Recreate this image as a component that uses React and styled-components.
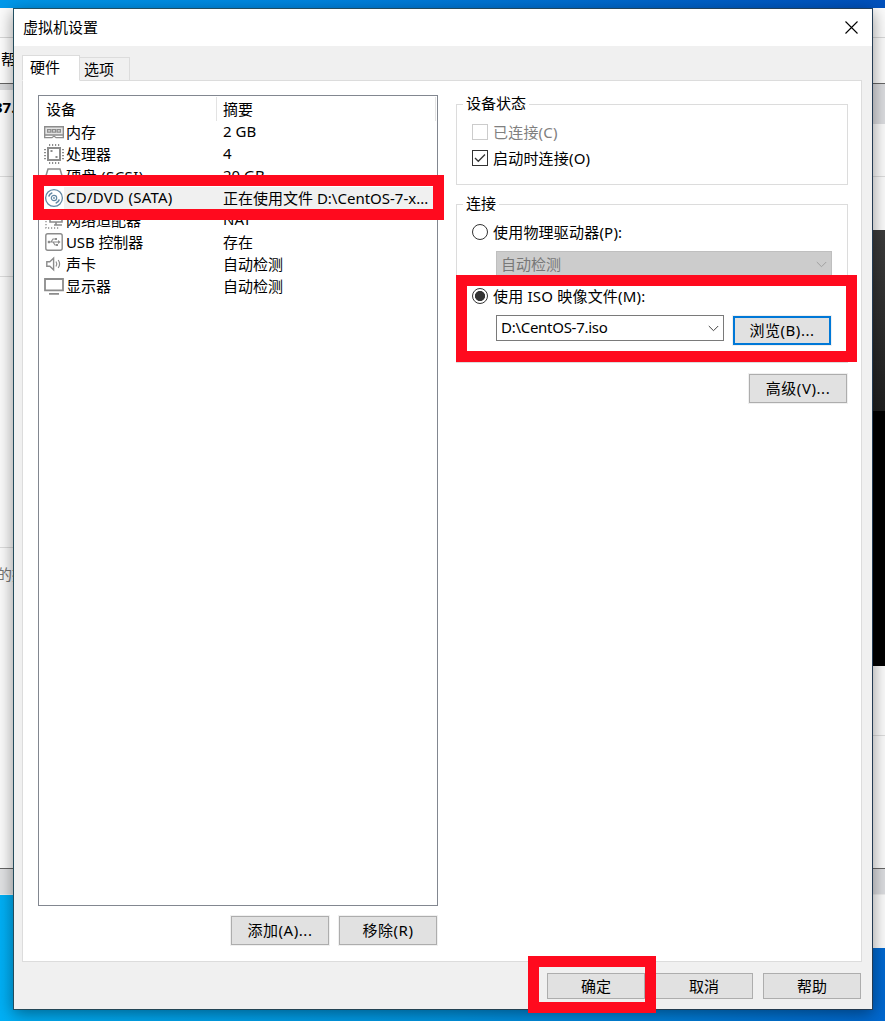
import React from 'react';
import styled, { createGlobalStyle } from 'styled-components';

const GlobalStyle = createGlobalStyle`
  * {
    box-sizing: border-box;
  }

  body {
    margin: 0;
    overflow: hidden;
    font-family: 'Noto Sans', 'Noto Sans CJK SC', sans-serif;
    font-size: 15px;
    color: #000;
  }
`;

const Desktop = styled.div`
  display: flex;
  width: 885px;
  height: 1021px;
  padding-top: 8px;
  overflow: hidden;
  white-space: nowrap;
  background:
    linear-gradient(90deg, #0098ea, #0085e0 35%, #0050bc) top / 100% 8px no-repeat,
    linear-gradient(90deg, #00b0f6, #0097e4 50%, #0068d0);
`;

const Backdrop = styled.div`
  width: ${props => props.$width}px;
  height: ${props => props.$height}px;
  flex: none;
  overflow: hidden;
  background: #fff;
`;

const Strip = styled.div`
  height: ${props => props.$height}px;
  padding: ${props => props.$pad || 0};
  display: flex;
  align-items: center;
  background: ${props => props.$fill || '#fcfcfc'};
  border-bottom: ${props => (props.$line ? `1px solid ${props.$line}` : '0')};
  font-size: 15px;
  font-weight: ${props => (props.$bold ? 700 : 400)};
  color: ${props => props.$color || '#000'};
  text-indent: ${props => props.$shift || 0}px;
`;

const Dialog = styled.div`
  position: relative;
  z-index: 1;
  flex: none;
  display: flex;
  flex-direction: column;
  width: 860px;
  height: 1002px;
  border: 1px solid rgba(50, 50, 50, 0.7);
  background: #f0f0f0;
  background-clip: padding-box;
  box-shadow: 0 4px 16px rgba(0, 0, 0, 0.42);
`;

const TitleBar = styled.div`
  height: 37px;
  padding: 0 14px 2px 9px;
  display: flex;
  align-items: center;
  justify-content: space-between;
  background: #fff;

  svg {
    margin-top: 1px;
  }
`;

const TabBar = styled.div`
  height: 35px;
  flex: none;
  margin: 0 0 -1px 8px;
  padding-top: 9px;
  display: flex;
  align-items: flex-end;
  z-index: 1;
`;

const Tab = styled.div`
  width: ${props => (props.$active ? 58 : 50)}px;
  height: ${props => (props.$active ? 26 : 24)}px;
  padding: ${props => (props.$active ? '0 0 4px 7px' : '0 0 2px 4px')};
  display: flex;
  align-items: center;
  border: 1px solid #dcdcdc;
  border-bottom-color: ${props => (props.$active ? '#fff' : '#dcdcdc')};
  border-left-width: ${props => (props.$active ? 1 : 0)}px;
  background: ${props => (props.$active ? '#fff' : '#f0f0f0')};
`;

const Panel = styled.div`
  width: 840px;
  height: 882px;
  flex: none;
  margin-left: 8px;
  padding: 14px 13px 0 15px;
  display: flex;
  justify-content: space-between;
  border: 1px solid #dcdcdc;
  background: #fff;
`;

const DeviceColumn = styled.div`
  width: 400px;
`;

const DeviceList = styled.div`
  height: 811px;
  border: 1px solid #828790;
`;

const ListHeader = styled.div`
  height: 25px;
  padding: 1px 1px 0 0;
  display: flex;
`;

const HeaderCell = styled.div`
  width: ${props => props.$width}px;
  height: 24px;
  padding: 0 0 2px ${props => props.$indent}px;
  display: flex;
  align-items: center;
  border-right: 1px solid #e3e3e3;
`;

const DeviceRow = styled.div`
  height: 22px;
  padding-left: 5px;
  display: flex;
  align-items: center;
`;

const RowBody = styled.div`
  width: 369px;
  height: 22px;
  padding: 0 0 2px 2px;
  display: flex;
  align-items: center;
  background: ${props => (props.$selected ? '#f0f0f0' : 'transparent')};
`;

const DeviceName = styled.span`
  width: 157px;
  letter-spacing: ${props => props.$spacing || 0}px;
`;

const DeviceIcon = styled.svg`
  width: 20px;
  height: 20px;
  flex: none;
  fill: none;
  stroke: ${props => (props.$blue ? '#6489a5' : '#8c8c8c')};
  stroke-width: 2;
`;

const ButtonRow = styled.div`
  display: flex;
  justify-content: flex-end;
  gap: 10px;
  padding: ${props => props.$pad};
`;

const Button = styled.button`
  width: 98px;
  height: ${props => props.$height || 29}px;
  flex: none;
  padding: 0 0 ${props => (props.$flat ? 0 : 2)}px;
  border: ${props => (props.$focused ? '2px solid #0078d7' : '1px solid #adadad')};
  background: #e1e1e1;
  outline: 1px solid ${props => (props.$flat ? 'transparent' : '#f0f0f0')};
  font: inherit;
  letter-spacing: ${props => (props.$flat ? 0 : 0.55)}px;
  line-height: 20px;
  color: #000;
`;

const SettingsColumn = styled.div`
  width: 392px;
`;

const Group = styled.fieldset`
  position: relative;
  height: ${props => props.$height}px;
  margin: ${props => props.$top}px 0 0;
  padding: 14px 0 0 15px;
  display: flex;
  flex-direction: column;
  border: 1px solid #dcdcdc;
`;

// Caption sits over the top border of its group
const GroupLabel = styled.span`
  position: absolute;
  left: 6px;
  top: -13px;
  padding: 0 3px;
  line-height: 22px;
  background: #fff;
`;

const Choice = styled.label`
  height: 26px;
  margin-top: ${props => props.$top || 0}px;
  display: flex;
  align-items: center;
  gap: 5px;
  color: ${props => (props.$disabled ? '#808080' : '#000')};
`;

const ChoiceText = styled.span`
  padding-bottom: 2px;
  letter-spacing: 0.2px;
`;

const CheckBox = styled.svg`
  width: 16px;
  height: 16px;
  flex: none;
  border: 1px solid ${props => (props.$disabled ? '#ccc' : '#333')};
  fill: none;
  stroke: #333;
  stroke-width: 1.3;
`;

const Radio = styled.span`
  width: 16px;
  height: 16px;
  flex: none;
  border: 1px solid #333;
  border-radius: 50%;
  background: ${props => (props.$checked ? 'radial-gradient(circle, #333 4.7px, #fff 5.4px)' : '#fff')};
`;

const Select = styled.div`
  width: ${props => props.$width}px;
  height: 26px;
  flex: none;
  margin: ${props => props.$top || 0}px 0 0 24px;
  padding: 0 4px;
  display: flex;
  align-items: center;
  justify-content: space-between;
  border: 1px solid ${props => (props.$disabled ? '#bfbfbf' : '#7a7a7a')};
  background: ${props => (props.$disabled ? '#ccc' : '#fff')};
  color: ${props => (props.$disabled ? '#787878' : '#000')};

  svg {
    width: 11px;
    height: 7px;
    fill: none;
    stroke: ${props => (props.$disabled ? '#a0a0a0' : '#444')};
  }
`;

const SelectText = styled.span`
  padding-bottom: 2px;
  letter-spacing: ${props => props.$spacing || 0}px;
`;

const FileRow = styled.div`
  display: flex;
  gap: 9px;
  margin-top: 6px;
`;

const BrowseSlot = styled.div`
  padding-top: 1px;
`;

const Marker = styled.div`
  position: absolute;
  z-index: 2;
  left: ${props => props.$x}px;
  top: ${props => props.$y}px;
  width: ${props => props.$w}px;
  height: ${props => props.$h}px;
  border: 11px solid #ff0a1e;
  pointer-events: none;
`;

const icons = {
  memory: (
    <>
      <path d="M0 4h20v9H0z" fill="#e4e4e4" stroke="none" />
      <path d="M0 4.8h20M0 13h20M.6 4v12M19.4 4v12" strokeWidth="1.5" />
      <path d="M0 15.7h8l2-1.7 2 1.7h8" strokeWidth="1.2" />
      <path d="M3.6 7.6h3.2v2.6H3.6zM8.4 7.6h3.2v2.6H8.4zM13.2 7.6h3.2v2.6h-3.2z" strokeWidth="1.2" />
    </>
  ),
  cpu: (
    <>
      <rect x="4" y="4" width="12" height="12" />
      <path d="M5 1h11M5 19h11M1 5v11M19 5v11" strokeDasharray="1.2 1.8" />
      <path d="M6.5 7h2M11.5 13h2" />
    </>
  ),
  disk: <path d="M1 13 4 3h12l3 10v5H1zM1 13h18" strokeWidth="1.5" />,
  disc: (
    <>
      <circle cx="10" cy="10" r="8.4" strokeWidth="1.3" />
      <circle cx="10" cy="10" r="2.7" strokeWidth="1.2" />
      <circle cx="10" cy="10" r=".9" fill="#6489a5" stroke="none" />
      <path d="M4.7 8.5A5.7 5.7 0 0 1 8.3 4.7M15.3 11.5a5.7 5.7 0 0 1-3.6 3.8" strokeWidth="1.6" />
    </>
  ),
  network: (
    <>
      <path d="M6 3h12v9H6zM12 12v3M10 15h8" strokeWidth="1.6" />
      <path d="M2 5v13h13" strokeWidth="1.3" strokeDasharray="1.2 1.8" />
    </>
  ),
  usb: (
    <>
      <rect x="1.8" y="1.8" width="16.4" height="16.4" rx="2" strokeWidth="1.4" />
      <path d="M5 10h9.5M7 10l2-3h2.5M9 10l2 3h1.5" strokeWidth="1.2" />
      <path d="M3.8 10h2.2" strokeWidth="2.4" />
      <path d="M11 7h2M12 13h2" />
      <path d="m14 8 2.6 2-2.6 2z" fill="#8c8c8c" stroke="none" />
    </>
  ),
  sound: (
    <>
      <path d="M2.8 7.7h3L9.6 4.2v11.6l-3.8-3.5h-3z" strokeWidth="1.4" />
      <path d="M12 7.5q1.6 2.5 0 5M14.2 6q2.8 4 0 8" strokeWidth="1.2" />
    </>
  ),
  display: <path d="M1 3h18v11.4H1zM5 17.8h10" strokeWidth="1.8" />,
};

const devices = [
  { icon: 'memory', name: '内存', summary: '2 GB' },
  { icon: 'cpu', name: '处理器', summary: '4' },
  { icon: 'disk', name: '硬盘 (SCSI)', summary: '20 GB', spacing: 0.4 },
  { icon: 'disc', name: 'CD/DVD (SATA)', summary: '正在使用文件 D:\\CentOS-7-x...', spacing: 0.25, selected: true },
  { icon: 'network', name: '网络适配器', summary: 'NAT' },
  { icon: 'usb', name: 'USB 控制器', summary: '存在', spacing: -0.1 },
  { icon: 'sound', name: '声卡', summary: '自动检测' },
  { icon: 'display', name: '显示器', summary: '自动检测' },
];

function Chevron() {
  return <svg viewBox="0 0 11 7"><path d="m.8 1 4.7 4.7L10.2 1" /></svg>;
}

export default function App() {
  return (
    <>
      <GlobalStyle />
      <Desktop>
        <Backdrop $width={13} $height={887}>
          <Strip $height={30} $line="#d8d8d8" />
          <Strip $height={46} $line="#666" $fill="#fff" $pad="0 0 5px 1px">帮</Strip>
          <Strip $height={6} $fill="#dcdddf" />
          <Strip $height={87} $line="#ddd" $bold $pad="0 0 52px" $shift={-6}>37.</Strip>
          <Strip $height={100} $line="#ddd" />
          <Strip $height={271} $line="#ddd" />
          <Strip $height={50} $color="#777" $shift={-3}>的控</Strip>
          <Strip $height={271} $line="#666" />
          <Strip $height={26} $fill="#e2e3e5" $line="#eee" />
        </Backdrop>
        <Dialog>
          <TitleBar>
            虚拟机设置
            <svg width="13" height="13" viewBox="0 0 13 13" stroke="#000" strokeWidth="1.1">
              <path d="m.5.5 12 12m0-12-12 12" />
            </svg>
          </TitleBar>
          <TabBar>
            <Tab $active>硬件</Tab>
            <Tab>选项</Tab>
          </TabBar>
          <Panel>
            <DeviceColumn>
              <DeviceList>
                <ListHeader>
                  <HeaderCell $width={178} $indent={7}>设备</HeaderCell>
                  <HeaderCell $width={219} $indent={6}>摘要</HeaderCell>
                </ListHeader>
                {devices.map(({ icon, name, summary, spacing, selected }) => (
                  <DeviceRow key={name}>
                    <DeviceIcon viewBox="0 0 20 20" $blue={selected}>{icons[icon]}</DeviceIcon>
                    <RowBody $selected={selected}>
                      <DeviceName $spacing={spacing}>{name}</DeviceName>
                      <span>{summary}</span>
                    </RowBody>
                  </DeviceRow>
                ))}
              </DeviceList>
              <ButtonRow $pad="10px 1px 0 0">
                <Button>添加(A)...</Button>
                <Button>移除(R)</Button>
              </ButtonRow>
            </DeviceColumn>
            <SettingsColumn>
              <Group $height={81} $top={9}>
                <GroupLabel>设备状态</GroupLabel>
                <Choice $disabled>
                  <CheckBox $disabled viewBox="0 0 14 14" />
                  <ChoiceText>已连接(C)</ChoiceText>
                </Choice>
                <Choice>
                  <CheckBox viewBox="0 0 14 14"><path d="m2 7 3.3 3.3L12 3.5" /></CheckBox>
                  <ChoiceText>启动时连接(O)</ChoiceText>
                </Choice>
              </Group>
              <Group $height={159} $top={19}>
                <GroupLabel>连接</GroupLabel>
                <Choice>
                  <Radio />
                  <ChoiceText>使用物理驱动器(P):</ChoiceText>
                </Choice>
                <Select $width={336} $top={6} $disabled>
                  <SelectText>自动检测</SelectText>
                  <Chevron />
                </Select>
                <Choice $top={6}>
                  <Radio $checked />
                  <ChoiceText>使用 ISO 映像文件(M):</ChoiceText>
                </Choice>
                <FileRow>
                  <Select $width={228}>
                    <SelectText $spacing={-0.28}>D:\CentOS-7.iso</SelectText>
                    <Chevron />
                  </Select>
                  <BrowseSlot>
                    <Button $focused>浏览(B)...</Button>
                  </BrowseSlot>
                </FileRow>
              </Group>
              <ButtonRow $pad="11px 1px 0 0">
                <Button>高级(V)...</Button>
              </ButtonRow>
            </SettingsColumn>
          </Panel>
          <ButtonRow $pad="11px 11px 0 0">
            <Button $height={26} $flat>确定</Button>
            <Button $height={26} $flat>取消</Button>
            <Button $height={26} $flat>帮助</Button>
          </ButtonRow>
          <Marker $x={19} $y={166} $w={411} $h={45} />
          <Marker $x={442} $y={266} $w={401} $h={87} />
          <Marker $x={514} $y={947} $w={128} $h={57} />
        </Dialog>
        <Backdrop $width={12} $height={940}>
          <Strip $height={30} $line="#d8d8d8" />
          <Strip $height={46} $line="#666" />
          <Strip $height={40} $fill="#dcdde0" />
          <Strip $height={53} $line="#ddd" />
          <Strip $height={53} />
          <Strip $height={181} $fill="linear-gradient(#3c3c3c, #202020)" />
          <Strip $height={255} $fill="#000" />
          <Strip $height={70} $line="#ddd" />
          <Strip $height={133} $line="#666" />
          <Strip $height={26} $fill="#dcdde0" $line="#eee" />
          <Strip $height={53} />
        </Backdrop>
      </Desktop>
    </>
  );
}
